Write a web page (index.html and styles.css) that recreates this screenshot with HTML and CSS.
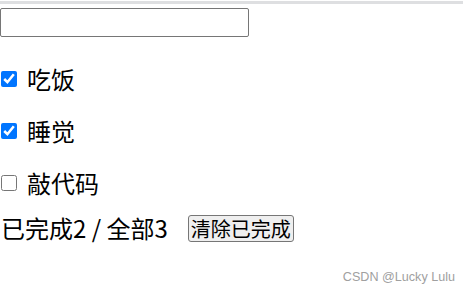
FILE: index.html
```html
<!DOCTYPE html>
<html lang="zh">
<head>
<meta charset="utf-8">
<link rel="stylesheet" href="styles.css">
</head>
<body>
<div class="topline"></div>
<div class="app">
  <input class="new-todo" type="text">
  <ul class="list">
    <li class="item"><input class="check" type="checkbox" checked><span>吃饭</span></li>
    <li class="item"><input class="check" type="checkbox" checked><span>睡觉</span></li>
    <li class="item"><input class="check" type="checkbox"><span>敲代码</span></li>
  </ul>
  <div class="footer">
    <span class="count">已完成2 / 全部3</span>
    <button class="clear">清除已完成</button>
  </div>
</div>
<div class="watermark">CSDN @Lucky Lulu</div>
</body>
</html>
```

FILE: styles.css
```css
html, body {
  margin: 0;
  padding: 0;
  background: #fff;
}
body {
  font-family: "Microsoft YaHei", "Noto Sans CJK SC", sans-serif;
  font-size: 24px;
  color: #000;
  width: 463px;
  height: 294px;
  position: relative;
  overflow: hidden;
}
.topline {
  margin-top: 1px;
  height: 3px;
  background: #dedfe1;
}
.app {
  display: flex;
  flex-direction: column;
}
.new-todo {
  box-sizing: border-box;
  margin: 4px 0 0 0;
  width: 249px;
  height: 29px;
  border: 1px solid #767676;
  border-radius: 2px;
  padding: 0 4px;
  font-size: 16px;
  outline: none;
}
.list {
  list-style: none;
  margin: 28px 0 0 0;
  padding: 0;
  display: flex;
  flex-direction: column;
  gap: 24px;
}
.item {
  display: flex;
  align-items: center;
  height: 28px;
  line-height: 28px;
}
.check {
  margin: 0 10px 0 1px;
  width: 16px;
  height: 16px;
}
.footer {
  margin-top: 17px;
  display: flex;
  align-items: center;
  height: 28px;
}
.count {
  margin-left: 1px;
  line-height: 28px;
}
.clear {
  margin-left: 20px;
  height: 27px;
  padding: 0 2px;
  font-family: "Microsoft YaHei", "Noto Sans CJK SC", sans-serif;
  font-size: 20px;
  line-height: 25px;
  border: 1px solid #767676;
  border-radius: 3px;
  background: #efefef;
  color: #000;
}
.watermark {
  position: absolute;
  right: 8px;
  bottom: 10px;
  font-family: "Liberation Sans", Arial, sans-serif;
  font-size: 12.6px;
  color: #a0a0a0;
}
```
